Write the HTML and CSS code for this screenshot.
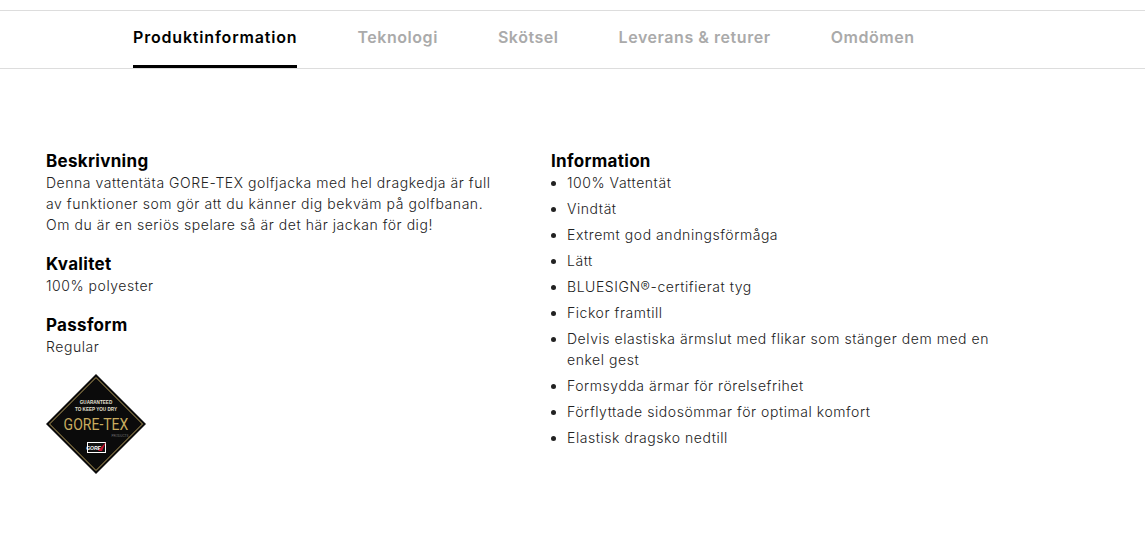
FILE: index.html
```html
<!DOCTYPE html>
<html lang="sv">
<head>
    <meta charset="UTF-8">
    <title>Produktinformation</title>
    <link rel="stylesheet" href="styles.css">
</head>
<body>
    <nav class="tabs">
        <a class="tab active" href="#">Produktinformation</a>
        <a class="tab" href="#">Teknologi</a>
        <a class="tab" href="#">Skötsel</a>
        <a class="tab" href="#">Leverans &amp; returer</a>
        <a class="tab" href="#">Omdömen</a>
    </nav>

    <main class="content">
        <section class="col-left">
            <h3>Beskrivning</h3>
            <p>Denna vattentäta GORE-TEX golfjacka med hel dragkedja är full<br>av funktioner som gör att du känner dig bekväm på golfbanan.<br>Om du är en seriös spelare så är det här jackan för dig!</p>
            <h3>Kvalitet</h3>
            <p>100% polyester</p>
            <h3>Passform</h3>
            <p class="last">Regular</p>
            <svg class="badge" width="100" height="100" viewBox="0 0 100 100">
                <polygon points="50,0 100,50 50,100 0,50" fill="#0b0b0b"/>
                <polygon points="50,3.5 96.5,50 50,96.5 3.5,50" fill="none" stroke="#b9a05c" stroke-width="1"/>
                <text x="50" y="30" class="badge-small">GUARANTEED</text>
                <text x="50" y="36.500" class="badge-small">TO KEEP YOU DRY</text>
                <text class="badge-logo" transform="translate(50 56) scale(.85 1)">GORE-TEX</text>
                <text x="74" y="63" class="badge-products">PRODUCTS</text>
                <rect x="41" y="68" width="19" height="11" fill="#fff"/>
                <rect x="42" y="69" width="17" height="9" fill="#111"/>
                <text x="47.500" y="76" class="badge-mark">GORE</text>
                <path d="M52 77 L60 68 L56 77 Z" fill="#c8102e"/>
            </svg>
        </section>
        <section class="col-right">
            <h3>Information</h3>
            <ul>
                <li>100% Vattentät</li>
                <li>Vindtät</li>
                <li>Extremt god andningsförmåga</li>
                <li>Lätt</li>
                <li>BLUESIGN®-certifierat tyg</li>
                <li>Fickor framtill</li>
                <li>Delvis elastiska ärmslut med flikar som stänger dem med en enkel gest</li>
                <li>Formsydda ärmar för rörelsefrihet</li>
                <li>Förflyttade sidosömmar för optimal komfort</li>
                <li>Elastisk dragsko nedtill</li>
            </ul>
        </section>
    </main>
</body>
</html>
```

FILE: styles.css
```css
body {
    margin: 0;
    padding-top: 10px;
    background: #fff;
    color: #222;
    font-family: Inter, "Liberation Sans", sans-serif;
    font-size: 14px;
    font-weight: 350;
    letter-spacing: 0.55px;
}
.tabs {
    display: flex;
    gap: 60px;
    height: 57px;
    padding-left: 133px;
    border-top: 1px solid #ddd;
    border-bottom: 1px solid #ddd;
}
.tab {
    height: 54px;
    line-height: 52px;
    color: #aaa;
    font-size: 16px;
    font-weight: 600;
    letter-spacing: 0.55px;
    text-decoration: none;
}
.tab.active {
    color: #000;
    letter-spacing: 0.82px;
    border-bottom: 3px solid #000;
}
.content {
    display: flex;
    padding: 81px 0 0 46px;
}
.col-left {
    width: 505px;
}
.col-right {
    width: 445px;
}
h3 {
    margin: 0;
    color: #000;
    font-size: 17px;
    font-weight: 700;
    letter-spacing: 0.3px;
    line-height: 22px;
}
p {
    margin: 0 0 18px;
    line-height: 21px;
}
p.last {
    margin-bottom: 17px;
}
ul {
    margin: 0;
    padding-left: 16px;
}
li {
    margin-bottom: 5px;
    line-height: 21px;
}
.badge {
    display: block;
}
.badge text {
    text-anchor: middle;
    font-family: "Liberation Sans", sans-serif;
    letter-spacing: 0;
}
.badge .badge-small {
    fill: #e4e0d4;
    font-size: 4.6px;
    font-weight: 700;
}
.badge .badge-logo {
    fill: #c8ab5f;
    font-family: Roboto, sans-serif;
    font-size: 16.5px;
    font-weight: 400;
}
.badge .badge-products {
    fill: #777;
    font-size: 3px;
}
.badge .badge-mark {
    fill: #fff;
    font-size: 5px;
    font-weight: 700;
    font-style: italic;
}
```
